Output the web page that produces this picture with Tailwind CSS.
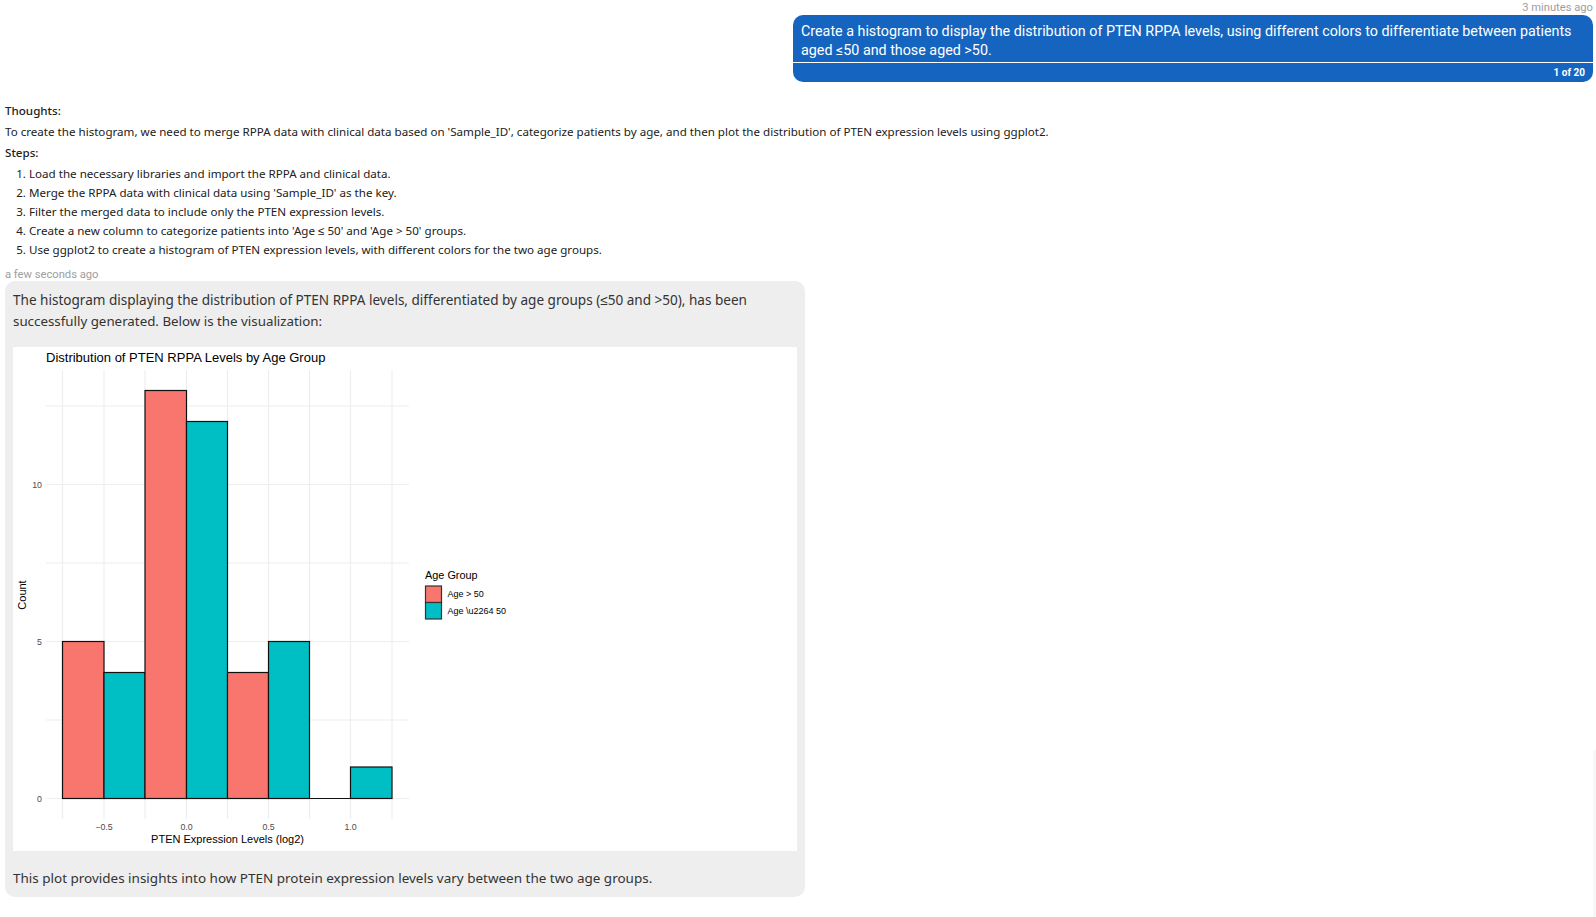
<!DOCTYPE html>
<html lang="en">
<head>
  <meta charset="utf-8" />
  <title>Chat</title>
  <script src="https://cdn.jsdelivr.net/npm/@tailwindcss/browser@4"></script>
</head>
<body class="bg-white h-[917px] overflow-hidden relative font-['Noto_Sans',sans-serif] text-[#212121]">
  <div class="absolute right-0 top-[750px] h-[167px] w-[3px] bg-[#f7f7f7]"></div>

  <!-- user message -->
  <div class="flex flex-col items-end pr-[3px]">
    <div class="h-[15px] text-[11.2px] leading-[15px] text-[#9e9e9e] font-['Roboto',sans-serif]">3 minutes ago</div>
    <div class="w-[800px] h-[67px] rounded-[10px] bg-[#1565c0] text-white font-['Roboto',sans-serif]">
      <div class="h-[48px] border-b border-white px-2 pt-[7px] text-[14.3px] font-normal leading-[19px]">
        Create a histogram to display the distribution of PTEN RPPA levels, using different colors to differentiate between patients aged ≤50 and those aged &gt;50.
      </div>
      <div class="pr-[8px] pt-[3px] text-right text-[10px] font-bold leading-[14px]">1 of 20</div>
    </div>
  </div>

  <!-- thoughts -->
  <div class="pl-[5px] pt-[19px] text-[11.6px] leading-[19px]">
    <p class="font-medium mb-[2px]">Thoughts:</p>
    <p class="mb-[2px]">To create the histogram, we need to merge RPPA data with clinical data based on 'Sample_ID', categorize patients by age, and then plot the distribution of PTEN expression levels using ggplot2.</p>
    <p class="font-medium mb-[2px]">Steps:</p>
    <ol class="list-decimal pl-6">
      <li>Load the necessary libraries and import the RPPA and clinical data.</li>
      <li>Merge the RPPA data with clinical data using 'Sample_ID' as the key.</li>
      <li>Filter the merged data to include only the PTEN expression levels.</li>
      <li>Create a new column to categorize patients into 'Age ≤ 50' and 'Age &gt; 50' groups.</li>
      <li>Use ggplot2 to create a histogram of PTEN expression levels, with different colors for the two age groups.</li>
    </ol>
  </div>

  <!-- assistant message -->
  <div class="pl-[5px] pt-[9px]">
    <div class="h-[13px] text-[11.2px] leading-[13px] text-[#9e9e9e] font-['Roboto',sans-serif]">a few seconds ago</div>
    <div class="w-[800px] h-[616px] rounded-[10px] bg-[#eeeeee] px-2 pt-[9px] text-[13.55px] leading-[20.5px] text-[#333]">
      <p class="mb-[16px]">The histogram displaying the distribution of PTEN RPPA levels, differentiated by age groups (≤50 and &gt;50), has been <span class="text-[13.33px]">successfully generated. Below is the visualization:</span></p>
      <svg class="block bg-white" width="784" height="504" viewBox="13 347 784 504" font-family="'Liberation Sans', sans-serif">
        <!-- grid -->
        <g stroke="#eeeeee" stroke-width="1.2">
          <path d="M46 406H409M46 484.5H409M46 563H409M46 641.5H409M46 720H409M46 798.5H409" />
          <path d="M62.5 370V819M104 370V819M145 370V819M186.5 370V819M227.5 370V819M268.5 370V819M309.5 370V819M350.5 370V819M392 370V819" />
        </g>
        <!-- bars -->
        <g stroke="#111" stroke-width="1.2">
          <rect x="62.5" y="641.5" width="41.5" height="157" fill="#F8766D" />
          <rect x="104" y="672.5" width="41" height="126" fill="#00BFC4" />
          <rect x="145" y="390.5" width="41.5" height="408" fill="#F8766D" />
          <rect x="186.5" y="421.5" width="41" height="377" fill="#00BFC4" />
          <rect x="227.5" y="672.5" width="41" height="126" fill="#F8766D" />
          <rect x="268.5" y="641.5" width="41" height="157" fill="#00BFC4" />
          <path d="M309.5 798.5H350.5" fill="none" />
          <rect x="350.5" y="767" width="41.5" height="31.5" fill="#00BFC4" />
        </g>
        <!-- axes -->
        <g font-size="8.8" fill="#4d4d4d">
          <text x="42" y="487.5" text-anchor="end">10</text>
          <text x="42" y="644.5" text-anchor="end">5</text>
          <text x="42" y="801.5" text-anchor="end">0</text>
          <text x="104" y="830" text-anchor="middle">−0.5</text>
          <text x="186.5" y="830" text-anchor="middle">0.0</text>
          <text x="268.5" y="830" text-anchor="middle">0.5</text>
          <text x="350.5" y="830" text-anchor="middle">1.0</text>
        </g>
        <text x="46" y="362" font-size="13" fill="#000">Distribution of PTEN RPPA Levels by Age Group</text>
        <text x="227.5" y="843" font-size="11" fill="#000" text-anchor="middle">PTEN Expression Levels (log2)</text>
        <text transform="translate(26 595) rotate(-90)" font-size="11" fill="#000" text-anchor="middle">Count</text>
        <!-- legend -->
        <text x="425" y="579" font-size="10.9" fill="#000">Age Group</text>
        <g stroke="#333" stroke-width="1.2">
          <rect x="425.5" y="586" width="16" height="16.5" fill="#F8766D" />
          <rect x="425.5" y="602.5" width="16" height="16.5" fill="#00BFC4" />
        </g>
        <g font-size="9" fill="#000">
          <text x="447.5" y="597">Age &gt; 50</text>
          <text x="447.5" y="614">Age \u2264 50</text>
        </g>
      </svg>
      <p class="mt-[17px] text-[13.47px]">This plot provides insights into how PTEN protein expression levels vary between the two age groups.</p>
    </div>
  </div>
</body>
</html>
